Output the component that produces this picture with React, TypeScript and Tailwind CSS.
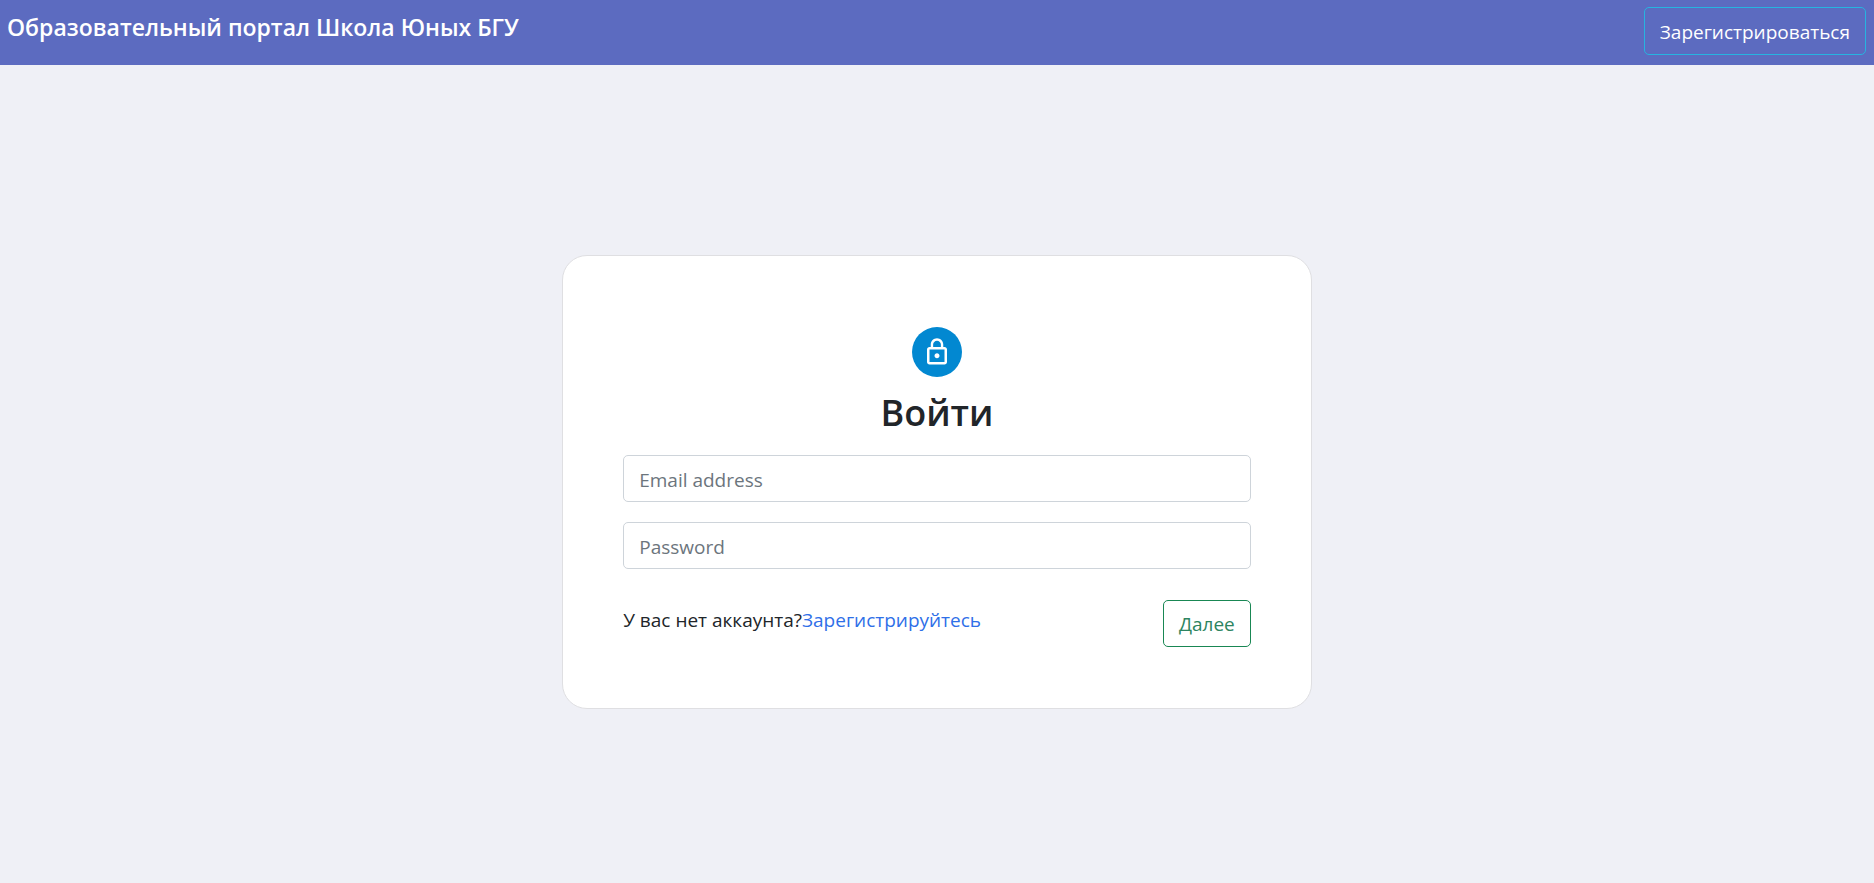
import { useState } from "react";

function LockIcon() {
  return (
    <svg viewBox="0 0 24 24" className="size-[30px]" fill="currentColor" aria-hidden="true">
      <path d="M12 17c1.100 0 2-.9 2-2s-.9-2-2-2-2 .9-2 2 .9 2 2 2zm6-9h-1V6c0-2.760-2.240-5-5-5S7 3.240 7 6v2H6c-1.100 0-2 .9-2 2v10c0 1.100.9 2 2 2h12c1.100 0 2-.9 2-2V10c0-1.100-.9-2-2-2zM8.900 6c0-1.710 1.390-3.100 3.100-3.100s3.100 1.390 3.100 3.100v2H8.900V6zM18 20H6V10h12v10z" />
    </svg>
  );
}

type FieldProps = {
  id: string;
  type: string;
  label: string;
  value: string;
  onChange: (value: string) => void;
};

function Field({ id, type, label, value, onChange }: FieldProps) {
  return (
    <input
      id={id}
      type={type}
      aria-label={label}
      placeholder={label}
      value={value}
      onChange={(e) => onChange(e.target.value)}
      className="block h-[47px] w-full rounded-[5px] border border-[#ced4da] bg-white px-[15px] pt-0.5 text-[19px] text-[#212529] placeholder:text-[#6c757d]"
    />
  );
}

export default function App() {
  const [email, setEmail] = useState("");
  const [password, setPassword] = useState("");

  return (
    <div className="flex min-h-screen flex-col bg-[#eff0f6] font-['Open_Sans','Noto_Sans',sans-serif] text-[19px] text-[#212529]">
      <header className="flex items-start justify-between bg-[#5c6bc0] pt-[7px] pr-2 pb-[10px] pl-[7px]">
        <h1 className="text-[23px] leading-10 font-semibold text-white">
          Образовательный портал Школа Юных БГУ
        </h1>
        <button
          type="button"
          className="h-12 rounded-[5px] border border-[#26b4e0] px-[15px] pt-0.5 text-white"
        >
          Зарегистрироваться
        </button>
      </header>

      <main className="flex grow items-center justify-center pt-4">
        <section className="w-2/5 rounded-[25px] border border-[#dfdfe2] bg-white px-[60px] pt-[71px] pb-[61px]">
          <div className="flex flex-col items-center">
            <span className="flex size-[50px] items-center justify-center rounded-full bg-[#0288d1] text-white">
              <LockIcon />
            </span>
            <h2 className="mt-3 mb-[18px] text-4xl leading-12 font-semibold">Войти</h2>
          </div>
          <form onSubmit={(e) => e.preventDefault()}>
            <div className="flex flex-col gap-5">
              <Field id="email" type="email" label="Email address" value={email} onChange={setEmail} />
              <Field id="password" type="password" label="Password" value={password} onChange={setPassword} />
            </div>
            <div className="mt-[31px] flex items-start justify-between">
              <p className="leading-10">
                У вас нет аккаунта?
                <a href="#register" className="text-[#2f6fe8]">
                  Зарегистрируйтесь
                </a>
              </p>
              <button
                type="submit"
                className="h-[47px] rounded-[5px] border border-[#198754] px-[15px] pt-0.5 text-[#2d8460]"
              >
                Далее
              </button>
            </div>
          </form>
        </section>
      </main>
    </div>
  );
}
